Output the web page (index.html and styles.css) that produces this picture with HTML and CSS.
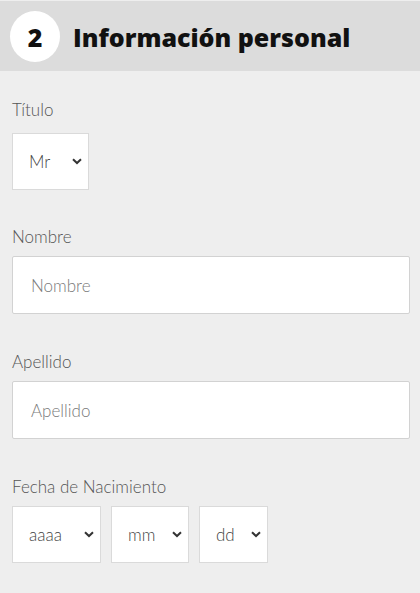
FILE: index.html
```html
<!DOCTYPE html>
<html lang="es">
<head>
<meta charset="utf-8">
<title>Información personal</title>
<link rel="stylesheet" href="styles.css">
</head>
<body>
<header class="step-header">
  <span class="step-num">2</span>
  <h1 class="step-title">Información personal</h1>
</header>
<form class="form">
  <div class="group group-title">
    <label class="label">Título</label>
    <div class="select select-title"><span class="select-text">Mr</span><svg class="chev" viewBox="0 0 10 7" width="10" height="7"><path d="M1 1.2 L5 5 L9 1.2" fill="none" stroke="#333" stroke-width="2"/></svg></div>
  </div>
  <div class="group">
    <label class="label">Nombre</label>
    <div class="input"><span class="placeholder">Nombre</span></div>
  </div>
  <div class="group">
    <label class="label">Apellido</label>
    <div class="input"><span class="placeholder">Apellido</span></div>
  </div>
  <div class="group">
    <label class="label">Fecha de Nacimiento</label>
    <div class="date-row">
      <div class="select select-year"><span class="select-text">aaaa</span><svg class="chev" viewBox="0 0 10 7" width="10" height="7"><path d="M1 1.2 L5 5 L9 1.2" fill="none" stroke="#333" stroke-width="2"/></svg></div>
      <div class="select select-month"><span class="select-text">mm</span><svg class="chev" viewBox="0 0 10 7" width="10" height="7"><path d="M1 1.2 L5 5 L9 1.2" fill="none" stroke="#333" stroke-width="2"/></svg></div>
      <div class="select select-day"><span class="select-text">dd</span><svg class="chev" viewBox="0 0 10 7" width="10" height="7"><path d="M1 1.2 L5 5 L9 1.2" fill="none" stroke="#333" stroke-width="2"/></svg></div>
    </div>
  </div>
</form>
</body>
</html>
```
FILE: styles.css
```css
html, body {
  margin: 0;
  padding: 0;
}
body {
  background: #eeeeee;
  font-family: Lato, "Liberation Sans", sans-serif;
  color: #555;
  padding-top: 1px;
}
.step-header {
  height: 70px;
  background: #dcdcdc;
  display: flex;
  align-items: center;
  padding-left: 10px;
}
.step-num {
  width: 50px;
  height: 51px;
  border-radius: 50%;
  background: #fff;
  display: flex;
  align-items: center;
  justify-content: center;
  font-family: "Open Sans", Lato, sans-serif;
  font-weight: 800;
  font-size: 25px;
  color: #111;
  margin-right: 13px;
  margin-top: 1px;
}
.step-title {
  margin: 0;
  font-family: "Open Sans", Lato, sans-serif;
  font-size: 25px;
  font-weight: 800;
  color: #111;
  margin-top: 1px;
}
.form {
  padding: 28px 10px 0 12px;
}
.group {
  margin-bottom: 37px;
}
.group.group-title {
  margin-bottom: 36px;
}
.label {
  display: block;
  font-size: 17px;
  line-height: 21px;
  color: #555;
  font-weight: 300;
}
.group-title .select {
  margin-top: 13px;
}
.input {
  margin-top: 9px;
  height: 56px;
  background: #fff;
  border: 1px solid #d2d2d2;
  border-radius: 2px;
  display: flex;
  align-items: center;
  padding-left: 18px;
}
.placeholder {
  font-size: 17px;
  font-weight: 300;
  color: #7a7a7a;
}
.select {
  height: 55px;
  background: #fff;
  border: 1px solid #dadada;
  display: flex;
  align-items: center;
  justify-content: space-between;
  padding: 0 6px 0 16px;
  box-sizing: content-box;
}
.select-text {
  font-size: 17px;
  font-weight: 300;
  color: #444;
}
.chev {
  display: block;
}
.select-title { width: 53px; }
.date-row {
  margin-top: 9px;
  display: flex;
  gap: 10px;
}
.select-year { width: 65px; }
.select-month { width: 54px; }
.select-day { width: 45px; }
```
